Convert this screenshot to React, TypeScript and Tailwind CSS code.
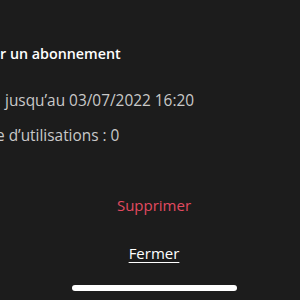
export default function App() {
  return (
    <div
      className="w-[300px] h-[300px] overflow-hidden bg-[#1c1c1c] flex flex-col"
      style={{ fontFamily: '"Open Sans", "Liberation Sans", sans-serif' }}
    >
      {/* Header */}
      <div className="pt-[42px] text-white text-[14.3px] leading-[24px] font-semibold whitespace-nowrap">
        r un abonnement
      </div>

      {/* Details */}
      <div className="mt-[23px] flex flex-col gap-[11px] text-[#c9c9c9] text-[15.4px] leading-[24px] whitespace-nowrap">
        <p className="pl-[5px]">jusqu’au 03/07/2022 16:20</p>
        <p className="-ml-[4px]">e d’utilisations : 0</p>
      </div>

      {/* Actions */}
      <div className="mt-[45px] flex flex-col items-center pl-[8px] gap-[24px] text-[15px] leading-[24px]">
        <button className="text-[#e24a60] font-medium">Supprimer</button>
        <button className="text-white font-medium underline underline-offset-[3px]">Fermer</button>
      </div>

      {/* Home indicator */}
      <div className="mt-auto mb-[9px] flex justify-center pl-[8px]">
        <div className="w-[165px] h-[6px] rounded-full bg-white" />
      </div>
    </div>
  );
}
